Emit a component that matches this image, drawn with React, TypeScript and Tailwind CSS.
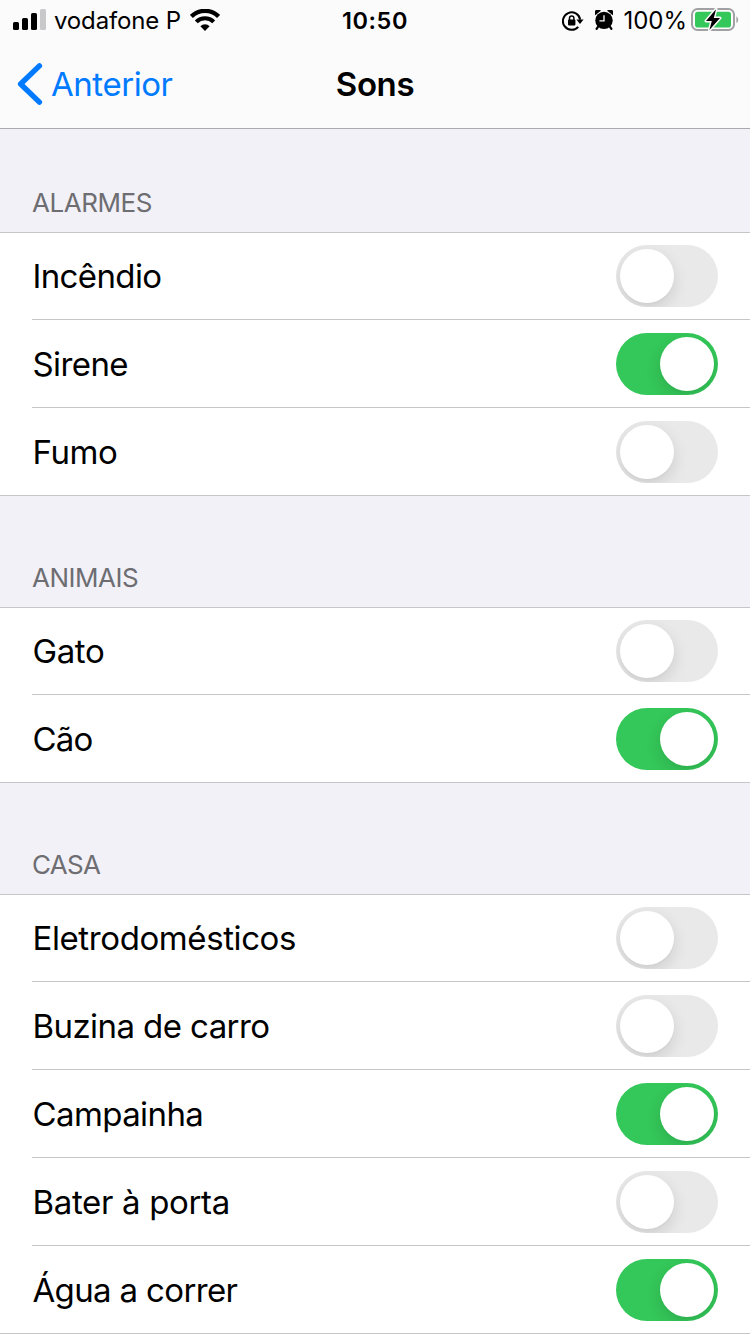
import React from "react";

type Sound = { name: string; on: boolean; tracking: string };
type Section = { title: string; tracking: string; sounds: Sound[] };

const sections: Section[] = [
  {
    title: "ALARMES",
    tracking: "tracking-[-0.45px]",
    sounds: [
      { name: "Incêndio", on: false, tracking: "tracking-[-0.62px]" },
      { name: "Sirene", on: true, tracking: "tracking-[-0.6px]" },
      { name: "Fumo", on: false, tracking: "tracking-[-0.4px]" },
    ],
  },
  {
    title: "ANIMAIS",
    tracking: "tracking-[-0.5px]",
    sounds: [
      { name: "Gato", on: false, tracking: "tracking-[-0.4px]" },
      { name: "Cão", on: true, tracking: "tracking-[-0.8px]" },
    ],
  },
  {
    title: "CASA",
    tracking: "tracking-[-0.7px]",
    sounds: [
      { name: "Eletrodomésticos", on: false, tracking: "tracking-[-0.4px]" },
      { name: "Buzina de carro", on: false, tracking: "tracking-[-0.58px]" },
      { name: "Campainha", on: true, tracking: "tracking-[-0.6px]" },
      { name: "Bater à porta", on: false, tracking: "tracking-[-0.34px]" },
      { name: "Água a correr", on: true, tracking: "tracking-[-0.65px]" },
    ],
  },
];

function Signal() {
  return (
    <svg width="34" height="22" viewBox="0 0 34 22" className="shrink-0">
      <rect x="0" y="13" width="6" height="8" rx="1.6" />
      <rect x="9" y="9" width="6" height="12" rx="1.6" />
      <rect x="18" y="4" width="6" height="17" rx="1.6" />
      <rect x="27" y="0" width="6" height="21" rx="1.6" fill="#c8c8ca" />
    </svg>
  );
}

function Wifi() {
  return (
    <svg width="30" height="22" viewBox="0 0 30 22" className="shrink-0" fill="none" stroke="#000">
      <path d="M1.4 7.5A19.2 19.2 0 0 1 28.6 7.5" strokeWidth="4.3" />
      <path d="M6.3 12.9A12.3 12.3 0 0 1 23.7 12.9" strokeWidth="4.1" />
      <path d="M15 22 10.4 17.3A6.4 6.4 0 0 1 19.6 17.3Z" fill="#000" stroke="none" />
    </svg>
  );
}

function RotationLock() {
  return (
    <svg width="22" height="20" viewBox="0 0 22 20" className="shrink-0">
      <path d="M16.2 15.8A8.7 8.7 0 1 1 18.2 8.6" fill="none" stroke="#000" strokeWidth="2" />
      <path d="M14.4 8.6H21.6L18 13Z" />
      <rect x="6" y="8.6" width="7.4" height="5.8" rx="0.8" />
      <path d="M7.5 9V7.2a2.2 2.2 0 0 1 4.4 0V9" fill="none" stroke="#000" strokeWidth="1.5" />
    </svg>
  );
}

function Alarm() {
  return (
    <svg width="18" height="20" viewBox="0 0 18 20" className="shrink-0">
      <circle cx="9" cy="10.4" r="8.7" />
      <path d="M0.2 5.2A3.2 3.2 0 0 1 5.8 0.7Z" />
      <path d="M17.8 5.2A3.2 3.2 0 0 0 12.2 0.7Z" />
      <path d="M3.6 16 1.6 18.8M14.4 16l2 2.8" stroke="#000" strokeWidth="2.2" strokeLinecap="round" />
      <path d="M9 5.2V10.8H4.4" fill="none" stroke="#fff" strokeWidth="1.3" />
    </svg>
  );
}

function Battery() {
  return (
    <svg width="49" height="24" viewBox="0 0 49 24" className="shrink-0">
      <rect x="1" y="1" width="42" height="21" rx="5.6" fill="none" stroke="#a1a1a3" strokeWidth="2" />
      <rect x="4" y="3.7" width="36" height="15.8" rx="2.8" fill="#34c759" />
      <path d="M45.4 8.2A4.3 4.3 0 0 1 45.4 15.2Z" fill="#a1a1a3" />
      <path d="M25 1.2 15 12.9H20.8L18.4 22 29 10H22.8Z" stroke="#fbfbfc" strokeWidth="3" paintOrder="stroke" strokeLinejoin="round" />
    </svg>
  );
}

function Toggle({ on }: { on: boolean }) {
  return (
    <div
      role="switch"
      aria-checked={on}
      className={`flex h-[62px] w-[102px] shrink-0 overflow-hidden rounded-full p-1 ${on ? "justify-end bg-[#34c759]" : "justify-start bg-[#e9e9ea]"}`}
    >
      <div className="size-[54px] rounded-full bg-white shadow-[0_6px_16px_rgba(0,0,0,0.12),0_2px_2px_rgba(0,0,0,0.02)]" />
    </div>
  );
}

export default function App() {
  return (
    <div className="h-[1334px] w-[750px] overflow-hidden bg-[#f2f1f7] font-['Inter','Liberation_Sans',sans-serif] text-black">
      <header className="h-[129px] border-b border-[#a9a9ae] bg-[#fbfbfc]">
        <div className="grid h-10 grid-cols-[1fr_auto_1fr] items-center">
          <div className="flex items-center pl-[13px]">
            <Signal />
            <span className="ml-[7px] pt-0.5 text-[24px] leading-[38px] tracking-[-0.15px]">vodafone P</span>
            <span className="ml-[9px] flex"><Wifi /></span>
          </div>
          <span className="pt-0.5 text-[23.5px] leading-[38px] font-semibold tracking-[0.6px]">10:50</span>
          <div className="flex items-center justify-end pr-[10px]">
            <span className="flex pt-px"><RotationLock /></span>
            <span className="ml-[11px] flex"><Alarm /></span>
            <span className="ml-[10px] pt-0.5 text-[24px] leading-[38px] tracking-[0px]">100%</span>
            <span className="ml-1 flex"><Battery /></span>
          </div>
        </div>
        <div className="grid h-[88px] grid-cols-[1fr_auto_1fr] items-center">
          <div className="flex items-center pl-[17px] text-[#007aff]">
            <svg width="26" height="42" viewBox="0 0 26 42" className="shrink-0" fill="none" stroke="currentColor" strokeWidth="5.4" strokeLinecap="round" strokeLinejoin="round">
              <path d="M22.4 2.9 3.6 21 22.4 39.1" />
            </svg>
            <span className="ml-2 text-[33px] leading-[88px] tracking-[-0.45px]">Anterior</span>
          </div>
          <h1 className="text-[33px] leading-[88px] font-semibold tracking-[-0.4px]">Sons</h1>
          <div />
        </div>
      </header>
      <main>
        {sections.map((section, i) => (
          <section key={section.title}>
            <h2
              className={`flex items-end border-b border-[#c6c6c9] pb-[13px] pl-8 text-[26px] leading-8 text-[#6d6d72] ${section.tracking} ${i === 0 ? "h-[104px]" : "h-28"}`}
            >
              {section.title}
            </h2>
            <ul className="bg-white">
              {section.sounds.map((sound, j) => {
                const last = j === section.sounds.length - 1;
                return (
                  <li key={sound.name} className={`flex ${last ? "border-b border-[#c6c6c9]" : ""} ${j === 0 ? "h-[87px]" : "h-22"}`}>
                    <div className={`ml-8 flex flex-1 items-end justify-between pr-8 ${last ? "" : "border-b border-[#c6c6c9]"} pb-3`}>
                      <span className={`pl-[0.5px] text-[33px] leading-[62px] ${sound.tracking}`}>{sound.name}</span>
                      <Toggle on={sound.on} />
                    </div>
                  </li>
                );
              })}
            </ul>
          </section>
        ))}
      </main>
    </div>
  );
}
